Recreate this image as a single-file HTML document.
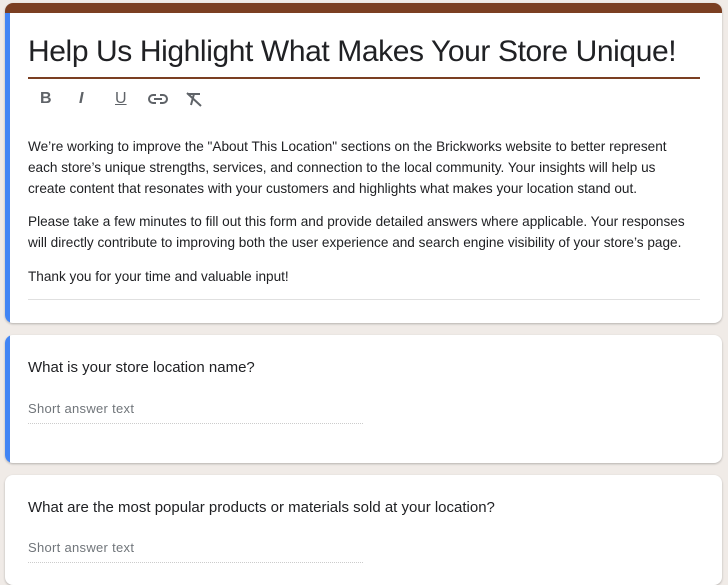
<!DOCTYPE html>
<html><head><style>
body{margin:0;background:#f0ebe7;width:728px;height:578px;overflow:hidden;font-family:"Liberation Sans",sans-serif;color:#202124}
.card{position:absolute;left:5px;width:717px;background:#fff;border-radius:8px;box-shadow:0 1px 2px rgba(0,0,0,.25);overflow:hidden}
.blue{position:absolute;left:0;top:0;bottom:0;width:5px;background:#4285f4}
.t{position:absolute;left:23px;white-space:nowrap}
.p{font-size:13.6px;line-height:21px;letter-spacing:0px}
</style></head><body>
<div class="card" style="top:3px;height:320px">
 <div style="position:absolute;left:0;right:0;top:0;height:10px;background:#7b3f22"></div>
 <div class="blue" style="top:10px"></div>
 <div class="t" style="top:32px;font-size:30px;letter-spacing:-0.4px">Help Us Highlight What Makes Your Store Unique!</div>
 <div style="position:absolute;left:23px;top:74px;width:672px;height:2px;background:#7b3f22"></div>
 <div style="position:absolute;left:35px;top:87px;font-size:16px;color:#5f6368;font-weight:bold">B</div>
 <div style="position:absolute;left:74px;top:87px;font-size:16px;color:#5f6368;font-style:italic;font-weight:bold">I</div>
 <div style="position:absolute;left:110px;top:87px;font-size:16px;color:#5f6368;text-decoration:underline">U</div>
 <svg style="position:absolute;left:143px;top:89px" width="20" height="14" viewBox="0 0 20 14"><path d="M8 3H5a4 4 0 0 0 0 8h3M12 3h3a4 4 0 0 1 0 8h-3M6 7h8" fill="none" stroke="#5f6368" stroke-width="2"/></svg>
 <svg style="position:absolute;left:180px;top:88px" width="18" height="16" viewBox="0 0 18 16"><path d="M3 3h12M9 3l-3 11M2 2l14 13" fill="none" stroke="#5f6368" stroke-width="2"/></svg>
 <div class="t p" style="top:133px">We’re working to improve the "About This Location" sections on the Brickworks website to better represent<br>each store’s unique strengths, services, and connection to the local community. Your insights will help us<br>create content that resonates with your customers and highlights what makes your location stand out.</div>
 <div class="t p" style="top:208px">Please take a few minutes to fill out this form and provide detailed answers where applicable. Your responses<br>will directly contribute to improving both the user experience and search engine visibility of your store’s page.</div>
 <div class="t p" style="top:263px">Thank you for your time and valuable input!</div>
 <div style="position:absolute;left:23px;top:296px;width:672px;height:1px;background:#e0e0e0"></div>
</div>
<div class="card" style="top:335px;height:128px">
 <div class="blue"></div>
 <div class="t" style="top:24px;font-size:15px;letter-spacing:0px">What is your store location name?</div>
 <div class="t" style="top:66px;font-size:13px;color:#70757a;letter-spacing:0.3px">Short answer text</div>
 <div style="position:absolute;left:23px;top:88px;width:335px;border-top:1px dotted #ccc"></div>
</div>
<div class="card" style="top:475px;height:110px">
 <div class="t" style="top:24px;font-size:15px;letter-spacing:0px">What are the most popular products or materials sold at your location?</div>
 <div class="t" style="top:65px;font-size:13px;color:#70757a;letter-spacing:0.3px">Short answer text</div>
 <div style="position:absolute;left:23px;top:87px;width:335px;border-top:1px dotted #ccc"></div>
</div>
</body></html>
